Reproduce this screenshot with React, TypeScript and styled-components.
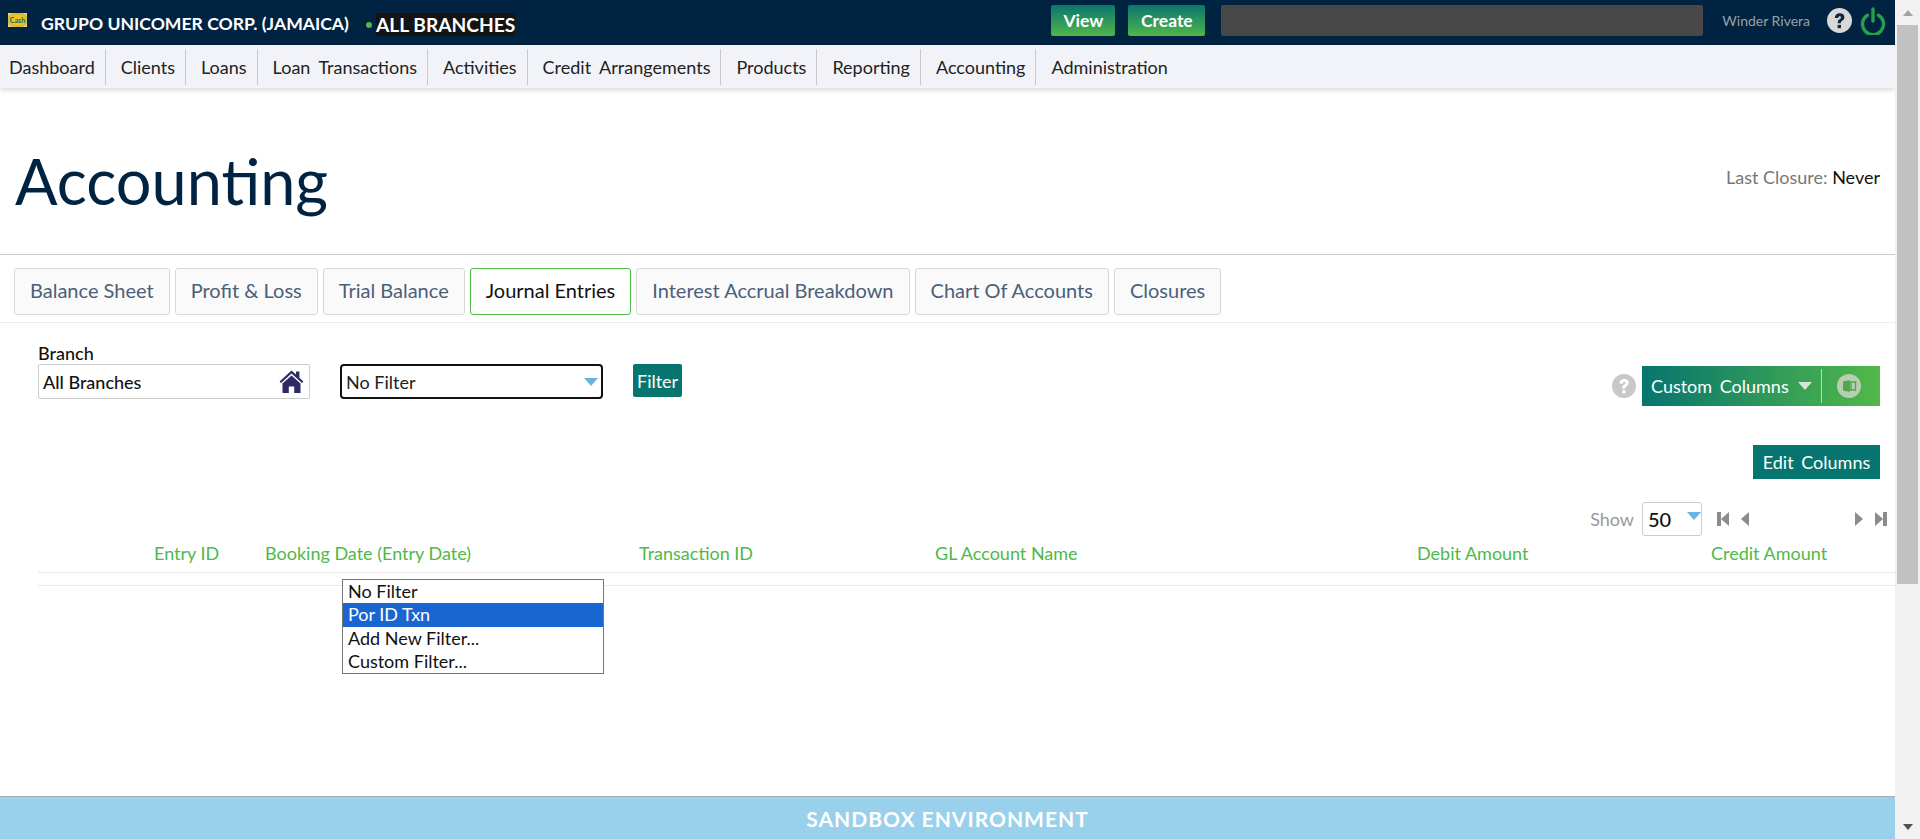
import styled, { createGlobalStyle } from "styled-components";

const GlobalStyle = createGlobalStyle`
    html, body {
        margin: 0;
        padding: 0;
        height: 100%;
        overflow: hidden;
        background: #fff;
        font-family: Lato, "Open Sans", sans-serif;
    }
    * {
        box-sizing: border-box;
    }
`;

const Shell = styled.div`
    display: flex;
    width: 1920px;
    height: 839px;
`;

const Page = styled.div`
    flex: 1;
    min-width: 0;
    display: flex;
    flex-direction: column;
`;

const Scrollbar = styled.div`
    width: 25px;
    background: #f1f1f1;
    display: flex;
    flex-direction: column;
    align-items: stretch;
`;

const ScrollArrow = styled.div<{ $down?: boolean }>`
    height: 25px;
    display: flex;
    align-items: center;
    justify-content: center;
    margin-top: ${(p) => (p.$down ? "auto" : "0")};

    &::after {
        content: "";
        border-left: 5.5px solid transparent;
        border-right: 5.5px solid transparent;
        ${(p) => (p.$down ? "border-top: 6px solid #505050;" : "border-bottom: 6px solid #a3a3a3;")}
    }
`;

const ScrollThumb = styled.div`
    height: 559px;
    margin: 0 2px;
    background: #c1c1c1;
`;

const TopBar = styled.header`
    height: 45px;
    background: #002341;
    display: flex;
    align-items: center;
    padding: 0 0 0 8px;
    flex-shrink: 0;
`;

const Logo = styled.span`
    width: 19px;
    height: 14px;
    margin: -6px 14px 0 0;
    background: radial-gradient(ellipse at center, #e8c820 45%, #d8b838 70%, #ece8c8 100%);
    color: #1f6f6a;
    font-size: 7px;
    font-weight: 900;
    line-height: 14px;
    text-align: center;
    overflow: hidden;
`;

const CompanyName = styled.span`
    color: #fff;
    font-size: 17.6px;
    font-weight: 700;
    white-space: nowrap;
    margin-top: 2px;
`;

const StatusDot = styled.span`
    width: 6px;
    height: 6px;
    margin: 5px 4px 0 17px;
    border-radius: 50%;
    background: #4fb848;
`;

const BranchBadge = styled.span`
    background: #141414;
    color: #fff;
    font-size: 19.2px;
    font-weight: 700;
    line-height: 23px;
    margin-top: 3px;
    white-space: nowrap;
`;

const TopActions = styled.div`
    margin-left: auto;
    display: flex;
    align-items: center;
    padding-bottom: 4px;
`;

const TopButton = styled.button<{ $width: number }>`
    width: ${(p) => p.$width}px;
    height: 31px;
    margin-right: 13px;
    padding: 0;
    border: 0;
    border-radius: 2px;
    background: linear-gradient(#0a7570, #50b648);
    color: #fff;
    font-family: inherit;
    font-size: 17.5px;
    font-weight: 700;
`;

const SearchBox = styled.div`
    width: 482px;
    height: 31px;
    margin-left: 3px;
    border-radius: 2px;
    background: #484848;
`;

const UserName = styled.span`
    margin-left: 19px;
    color: #99a0a8;
    font-size: 14px;
    white-space: nowrap;
`;

const TopIcons = styled.div`
    display: flex;
    align-items: center;
    gap: 8px;
    margin: 0 9px 0 17px;
`;

const Nav = styled.nav`
    height: 43px;
    flex-shrink: 0;
    display: flex;
    align-items: center;
    background: #f2f3f9;
    box-shadow: 0 2px 5px rgba(0, 0, 0, 0.16);
    padding-left: 9px;
`;

const NavItem = styled.a`
    height: 36px;
    display: flex;
    align-items: center;
    padding-right: 10px;
    margin-right: 15px;
    border-right: 1px solid #c8c8c8;
    color: #222;
    font-size: 18px;
    word-spacing: 4px;
    white-space: nowrap;

    &:last-child {
        border-right: 0;
    }
`;

const TitleRow = styled.div`
    height: 167px;
    flex-shrink: 0;
    display: flex;
    align-items: flex-start;
    justify-content: space-between;
    padding: 53px 15px 0 15px;
    border-bottom: 1px solid #ccc;
`;

const Title = styled.h1`
    margin: 0;
    color: #002341;
    font-size: 63px;
    font-weight: 400;
    line-height: 80px;
`;

const Closure = styled.div`
    margin-top: 25px;
    color: #777;
    font-size: 18px;

    & b {
        color: #111;
        font-weight: 400;
    }
`;

const TabRow = styled.div`
    height: 68px;
    flex-shrink: 0;
    display: flex;
    gap: 5px;
    padding: 13px 0 0 14px;
    border-bottom: 1px solid #eeeee8;
`;

const Tab = styled.a<{ $active?: boolean }>`
    height: 47px;
    display: flex;
    align-items: center;
    padding: 0 15px 3px;
    border: 1px solid ${(p) => (p.$active ? "#4fb848" : "#d8d8d8")};
    border-radius: 3px;
    background: ${(p) => (p.$active ? "#fff" : "#fafafa")};
    color: ${(p) => (p.$active ? "#111" : "#4a6078")};
    font-size: 20px;
    white-space: nowrap;
`;

const Content = styled.main`
    position: relative;
    flex: 1;
    min-height: 0;
    padding: 0 15px 0 38px;
`;

const FilterRow = styled.div`
    display: flex;
    align-items: flex-start;
    padding-top: 21px;
    height: 101px;
`;

const BranchField = styled.div`
    width: 272px;
    margin-right: 30px;
`;

const FieldLabel = styled.div`
    color: #111;
    font-size: 18px;
    line-height: 19px;
    font-weight: 500;
`;

const BranchInput = styled.div`
    height: 35px;
    margin-top: 1px;
    display: flex;
    align-items: center;
    justify-content: space-between;
    padding: 0 5px 0 4px;
    border: 1px solid #ccc;
    border-radius: 2px;
    color: #111;
    font-size: 18px;
    font-weight: 500;
`;

const FilterSelect = styled.div`
    width: 263px;
    height: 35px;
    margin-top: 20px;
    display: flex;
    align-items: center;
    justify-content: space-between;
    padding: 0 3px 0 4px;
    border: 2px solid #111;
    border-radius: 4px;
    color: #222;
    font-size: 18px;
`;

const Caret = styled.span<{ $color?: string; $gap?: number }>`
    width: 0;
    height: 0;
    margin-left: ${(p) => p.$gap || 0}px;
    border-left: 7px solid transparent;
    border-right: 7px solid transparent;
    border-top: 8px solid ${(p) => p.$color || "#6ab4e0"};
`;

const FilterButton = styled.button`
    height: 33px;
    margin: 20px 0 0 30px;
    padding: 0 4px;
    border: 0;
    border-radius: 2px;
    background: #06756f;
    color: #fff;
    font-family: inherit;
    font-size: 18px;
`;

const ExportGroup = styled.div`
    margin-left: auto;
    margin-top: 22px;
    display: flex;
    align-items: center;
    gap: 6px;
`;

const ExportBar = styled.div`
    width: 238px;
    height: 40px;
    display: flex;
    align-items: center;
    padding-left: 9px;
    background: linear-gradient(90deg, #06756f, #52b848);
    color: #fff;
    font-size: 18px;
    word-spacing: 3px;
    white-space: nowrap;
`;

const ExportDivider = styled.span`
    width: 1px;
    height: 34px;
    margin: 0 15px 0 9px;
    background: rgba(255, 255, 255, 0.6);
`;

const EditRow = styled.div`
    display: flex;
    justify-content: flex-end;
    height: 34px;
    margin-top: 21px;
`;

const EditButton = styled.button`
    width: 127px;
    height: 34px;
    padding: 0;
    border: 0;
    background: #06756f;
    color: #fff;
    font-family: inherit;
    font-size: 18px;
    word-spacing: 3px;
`;

const Pager = styled.div`
    height: 34px;
    margin-top: 23px;
    margin-right: -7px;
    display: flex;
    align-items: center;
    justify-content: flex-end;
    gap: 12px;
    color: #999;
    font-size: 18px;
`;

const PageSize = styled.div`
    width: 60px;
    height: 34px;
    margin: 0 3px 0 -4px;
    padding-left: 5px;
    display: flex;
    align-items: center;
    justify-content: space-between;
    border: 1px solid #ccc;
    border-radius: 3px;
    color: #111;
    font-size: 20px;
    font-weight: 500;

    & > span:last-child {
        margin: -6px 0 0;
    }
`;

const PagerSpacer = styled.span`
    width: 82px;
`;

const HeaderRow = styled.div`
    height: 37px;
    margin-right: -15px;
    padding: 0 0 2px 116px;
    display: grid;
    grid-template-columns: 111px 374px 296px 482px 294px 1fr;
    align-items: center;
    border-bottom: 1px solid #e8e8e8;
    color: #4fb848;
    font-size: 18px;
`;

const EmptyRow = styled.div`
    height: 13px;
    margin-right: -15px;
    border-bottom: 1px solid #e8e8e8;
`;

const FilterMenu = styled.ul`
    position: absolute;
    left: 342px;
    top: 256px;
    width: 262px;
    margin: 0;
    padding: 0;
    list-style: none;
    background: #fff;
    border: 1px solid #767676;
    color: #111;
    font-size: 18px;
`;

const FilterOption = styled.li<{ $selected?: boolean }>`
    height: 23.25px;
    padding-left: 5px;
    line-height: 23px;
    background: ${(p) => (p.$selected ? "#1a66d0" : "transparent")};
    color: ${(p) => (p.$selected ? "#fff" : "#111")};
`;

const Footer = styled.footer`
    height: 43px;
    flex-shrink: 0;
    display: flex;
    align-items: center;
    justify-content: center;
    background: #99d0ec;
    border-top: 1px solid #aaa;
    color: #fff;
    font-size: 21px;
    font-weight: 700;
    letter-spacing: 1px;
`;

const navItems = ["Dashboard", "Clients", "Loans", "Loan Transactions", "Activities", "Credit Arrangements", "Products", "Reporting", "Accounting", "Administration"];
const tabs = ["Balance Sheet", "Profit & Loss", "Trial Balance", "Journal Entries", "Interest Accrual Breakdown", "Chart Of Accounts", "Closures"];
const columns = ["Entry ID", "Booking Date (Entry Date)", "Transaction ID", "GL Account Name", "Debit Amount", "Credit Amount"];
const filterOptions = ["No Filter", "Por ID Txn", "Add New Filter...", "Custom Filter..."];

function HelpIcon({ size, fill, mark }: { size: number; fill: string; mark: string }) {
    return (
        <svg width={size} height={size} viewBox="0 0 24 24">
            <circle cx="12" cy="12" r="12" fill={fill} />
            <path d="M7.5 9.5c0-2.8 2-4.5 4.7-4.5 2.6 0 4.5 1.5 4.5 3.8 0 1.8-1 2.7-2.2 3.5-.9.6-1.2 1-1.2 2v.4h-3v-.7c0-1.6.7-2.5 1.7-3.2.9-.7 1.4-1.1 1.4-1.8s-.5-1.2-1.2-1.2c-.9 0-1.4.6-1.4 1.9z" fill={mark} />
            <rect x="10.2" y="16.2" width="3.2" height="3.2" fill={mark} />
        </svg>
    );
}

function PowerIcon() {
    return (
        <svg width="26" height="28" viewBox="0 0 26 28">
            <path d="M7.5 8.2a10.5 10.5 0 1 0 11 0" fill="none" stroke="#27a04e" strokeWidth="3.4" strokeLinecap="round" />
            <path d="M13 2v12" fill="none" stroke="#27a04e" strokeWidth="3.4" strokeLinecap="round" />
        </svg>
    );
}

function HomeIcon() {
    return (
        <svg width="25" height="25" viewBox="0 0 25 25">
            <path d="M12.5 1.5 17 5.6V2.5h3.4v6.2l4 3.7-1.4 1.5L12.5 4.4 2 13.9.6 12.4z" fill="#2e2a63" />
            <path d="M12.5 6.5 21.5 14.6V24h-6.3v-6.5H9.8V24H3.5v-9.4z" fill="#2e2a63" />
        </svg>
    );
}

function ExcelIcon() {
    return (
        <svg width="24" height="24" viewBox="0 0 24 24">
            <circle cx="12" cy="12" r="12" fill="#b8ceb2" />
            <path d="M6 7.5l7-1.5v12l-7-1.5z" fill="#4fa850" />
            <path d="M14 8h4.5v8H14z" fill="none" stroke="#4fa850" strokeWidth="1.4" />
        </svg>
    );
}

function PagerArrow({ dir, edge }: { dir: "left" | "right"; edge?: boolean }) {
    const width = edge ? 12 : 8;
    const flip = dir === "right" ? `translate(${width} 0) scale(-1 1)` : undefined;
    return (
        <svg width={width} height="14" viewBox={`0 0 ${width} 14`}>
            <g transform={flip} fill="#8c8c8c">
                {edge && <rect x="0" y="0" width="4" height="14" />}
                <path d={edge ? "M12 0v14L4 7z" : "M8 0v14L0 7z"} />
            </g>
        </svg>
    );
}

export default function App() {
    return (
        <Shell>
            <GlobalStyle />
            <Page>
                <TopBar>
                    <Logo>Cash</Logo>
                    <CompanyName>GRUPO UNICOMER CORP. (JAMAICA)</CompanyName>
                    <StatusDot />
                    <BranchBadge>ALL BRANCHES</BranchBadge>
                    <TopActions>
                        <TopButton $width={64}>View</TopButton>
                        <TopButton $width={77}>Create</TopButton>
                        <SearchBox />
                        <UserName>Winder Rivera</UserName>
                        <TopIcons>
                            <HelpIcon size={25} fill="#d8d8d8" mark="#10263e" />
                            <PowerIcon />
                        </TopIcons>
                    </TopActions>
                </TopBar>
                <Nav>
                    {navItems.map((item) => (
                        <NavItem key={item}>{item}</NavItem>
                    ))}
                </Nav>
                <TitleRow>
                    <Title>Accounting</Title>
                    <Closure>
                        Last Closure: <b>Never</b>
                    </Closure>
                </TitleRow>
                <TabRow>
                    {tabs.map((tab) => (
                        <Tab key={tab} $active={tab === "Journal Entries"}>
                            {tab}
                        </Tab>
                    ))}
                </TabRow>
                <Content>
                    <FilterRow>
                        <BranchField>
                            <FieldLabel>Branch</FieldLabel>
                            <BranchInput>
                                All Branches
                                <HomeIcon />
                            </BranchInput>
                        </BranchField>
                        <FilterSelect>
                            No Filter
                            <Caret />
                        </FilterSelect>
                        <FilterButton>Filter</FilterButton>
                        <ExportGroup>
                            <HelpIcon size={24} fill="#c8c8c8" mark="#fff" />
                            <ExportBar>
                                Custom Columns
                                <Caret $color="#d8e4d8" $gap={9} />
                                <ExportDivider />
                                <ExcelIcon />
                            </ExportBar>
                        </ExportGroup>
                    </FilterRow>
                    <EditRow>
                        <EditButton>Edit Columns</EditButton>
                    </EditRow>
                    <Pager>
                        Show
                        <PageSize>
                            <span>50</span>
                            <Caret />
                        </PageSize>
                        <PagerArrow dir="left" edge />
                        <PagerArrow dir="left" />
                        <PagerSpacer />
                        <PagerArrow dir="right" />
                        <PagerArrow dir="right" edge />
                    </Pager>
                    <HeaderRow>
                        {columns.map((column) => (
                            <span key={column}>{column}</span>
                        ))}
                    </HeaderRow>
                    <EmptyRow />
                    <FilterMenu>
                        {filterOptions.map((option) => (
                            <FilterOption key={option} $selected={option === "Por ID Txn"}>
                                {option}
                            </FilterOption>
                        ))}
                    </FilterMenu>
                </Content>
                <Footer>SANDBOX ENVIRONMENT</Footer>
            </Page>
            <Scrollbar>
                <ScrollArrow />
                <ScrollThumb />
                <ScrollArrow $down />
            </Scrollbar>
        </Shell>
    );
}
